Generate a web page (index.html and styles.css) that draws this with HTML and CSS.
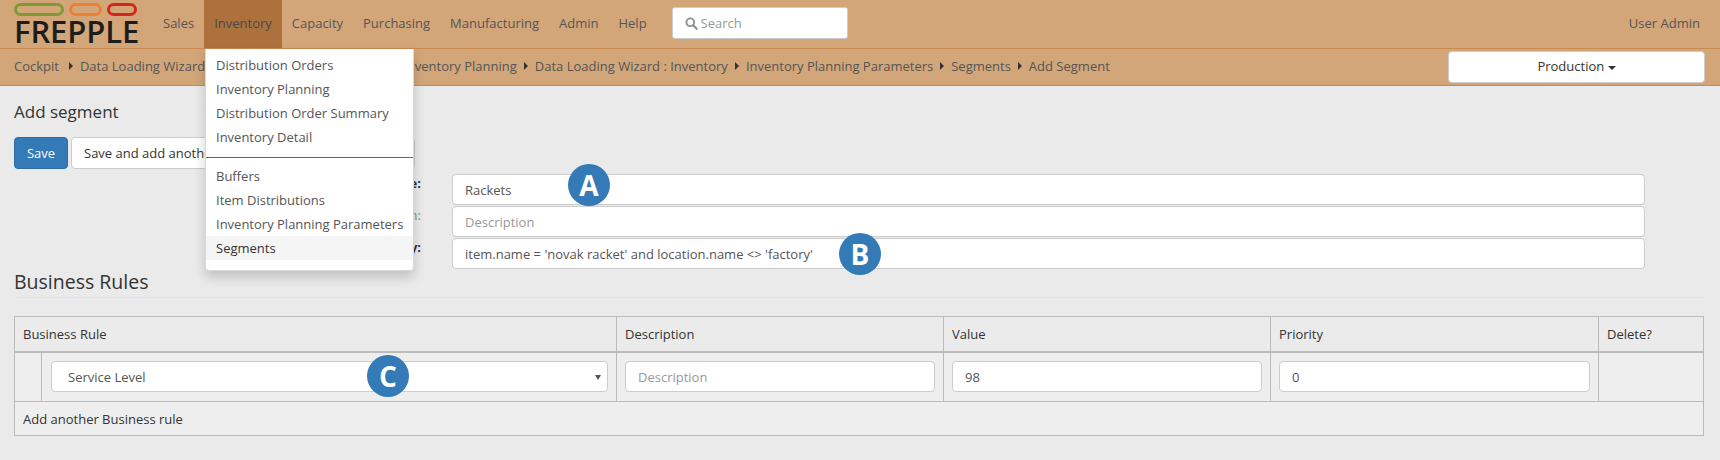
FILE: index.html
```html
<!DOCTYPE html>
<html lang="en">
<head>
<meta charset="utf-8">
<title>Add segment</title>
<link rel="stylesheet" href="styles.css">
</head>
<body>
<header class="navbar">
  <a class="logo">
    <span class="pills"><i class="pill green"></i><i class="pill orange"></i><i class="pill red"></i></span>
    <span class="logo-text">FREPPLE</span>
  </a>
  <nav class="menu">
    <a class="menu-item">Sales</a>
    <a class="menu-item active">Inventory</a>
    <a class="menu-item">Capacity</a>
    <a class="menu-item">Purchasing</a>
    <a class="menu-item">Manufacturing</a>
    <a class="menu-item">Admin</a>
    <a class="menu-item">Help</a>
  </nav>
  <div class="search">
    <svg class="search-icon" viewBox="0 0 14 14" width="13" height="13"><circle cx="5.7" cy="5.7" r="4.2" fill="none" stroke="#8a8f94" stroke-width="2"/><path d="M8.8 8.8L12.6 12.6" stroke="#8a8f94" stroke-width="2.4" stroke-linecap="round"/></svg>
    <input class="search-input" type="text" placeholder="Search">
  </div>
  <a class="user">User Admin</a>
</header>

<div class="crumbs">
  <ol class="crumb-list">
    <li class="first">Cockpit</li><li class="sep"></li>
    <li>Data Loading Wizard : Inventory</li><li class="sep"></li>
    <li class="tight">Inventory Detail</li><li class="sep"></li>
    <li>Inventory Planning</li><li class="sep"></li>
    <li>Data Loading Wizard : Inventory</li><li class="sep"></li>
    <li>Inventory Planning Parameters</li><li class="sep"></li>
    <li>Segments</li><li class="sep"></li>
    <li>Add Segment</li>
  </ol>
  <button class="scenario" type="button">Production <span class="caret"></span></button>
</div>

<ul class="dropdown">
  <li>Distribution Orders</li>
  <li>Inventory Planning</li>
  <li>Distribution Order Summary</li>
  <li>Inventory Detail</li>
  <li class="divider"></li>
  <li>Buffers</li>
  <li>Item Distributions</li>
  <li>Inventory Planning Parameters</li>
  <li class="hover">Segments</li>
</ul>

<main class="content">
  <h1 class="title">Add segment</h1>
  <div class="actions">
    <button class="btn primary" type="button">Save</button>
    <button class="btn wide" type="button">Save and add another</button>
  </div>
  <form class="fields">
    <label class="field-label strong">Name:</label>
    <input class="control" type="text" value="Rackets">
    <label class="field-label muted">Description:</label>
    <input class="control" type="text" placeholder="Description">
    <label class="field-label strong">Query:</label>
    <input class="control" type="text" value="item.name = 'novak racket' and location.name &lt;&gt; 'factory'">
  </form>
  <h2 class="section">Business Rules</h2>
  <table class="rules">
    <colgroup><col class="c1"><col class="c2"><col class="c3"><col class="c4"><col class="c5"><col class="c6"></colgroup>
    <thead>
      <tr><th colspan="2">Business Rule</th><th>Description</th><th>Value</th><th>Priority</th><th>Delete?</th></tr>
    </thead>
    <tbody>
      <tr class="data">
        <td></td>
        <td class="select-cell"><div class="select"><span>Service Level</span><i class="arrow"></i></div></td>
        <td><input class="control" type="text" placeholder="Description"></td>
        <td><input class="control" type="text" value="98"></td>
        <td><input class="control" type="text" value="0"></td>
        <td></td>
      </tr>
      <tr class="add"><td colspan="6">Add another Business rule</td></tr>
    </tbody>
  </table>
</main>

<span class="marker a">A</span>
<span class="marker b">B</span>
<span class="marker c">C</span>
</body>
</html>
```
FILE: styles.css
```css
* { box-sizing: border-box; }
html, body { margin: 0; height: 460px; overflow: hidden; }
body {
  position: relative;
  background: #eaeaea;
  color: #333;
  font: 13px/18px "Open Sans", sans-serif;
}
.navbar {
  display: flex;
  align-items: stretch;
  height: 49px;
  background: #d2a679;
  border-bottom: 1px solid #c98a50;
}
.logo { width: 153px; padding: 3px 0 0 14px; display: block; flex: none; }
.pills { display: flex; height: 14px; }
.pill { display: block; height: 13px; border: 3px solid; border-radius: 7px; }
.green { width: 50px; border-color: #7f9a35; }
.orange { width: 33px; margin-left: 5px; border-color: #ec8134; }
.red { width: 30px; margin-left: 5px; border-color: #d3261c; }
.logo-text {
  display: block;
  margin-top: -1px;
  font-size: 31px;
  line-height: 30px;
  font-weight: 600;
  letter-spacing: -0.1px;
  color: #1d1d1b;
}
.menu { display: flex; flex: none; }
.menu-item { padding: 14px 10px 0; color: #555; }
.menu-item.active { background: #ad713e; color: #4a4a4a; }
.search {
  position: relative;
  width: 176px;
  height: 32px;
  margin: 7px 0 0 15px;
  flex: none;
}
.search-icon { position: absolute; left: 13px; top: 10px; }
.search-input {
  width: 100%;
  height: 100%;
  padding: 0 8px 0 28px;
  border: 1px solid #ccc;
  border-radius: 3px;
  background: #fff;
  font: inherit;
  color: #555;
}
.search-input::placeholder { color: #999; }
.user { margin-left: auto; padding: 14px 20px 0 0; color: #555; }
.crumbs {
  display: flex;
  justify-content: space-between;
  height: 37px;
  padding: 2px 15px 0 14px;
  background: #d2a679;
  border-bottom: 1px solid #c98a50;
}
.crumb-list {
  display: flex;
  align-items: center;
  list-style: none;
  margin: 0;
  padding: 0 0 5px;
  color: #555;
  white-space: nowrap;
}
.first { margin-right: 3px; }
.tight { margin-right: -2px; }
.sep {
  width: 0;
  height: 0;
  margin: 0 7px;
  border-left: 4px solid #333;
  border-top: 4px solid transparent;
  border-bottom: 4px solid transparent;
}
.scenario {
  width: 257px;
  height: 32px;
  border: 1px solid #ccc;
  border-radius: 4px;
  background: #fff;
  color: #333;
  font: inherit;
  padding: 0 0 2px;
}
.caret {
  display: inline-block;
  vertical-align: middle;
  border-top: 4px solid #333;
  border-left: 4px solid transparent;
  border-right: 4px solid transparent;
}
.dropdown {
  position: absolute;
  left: 205px;
  top: 49px;
  width: 209px;
  margin: 0;
  padding: 4px 0 10px;
  list-style: none;
  background: #fff;
  border: 1px solid rgba(0, 0, 0, 0.15);
  border-top: 0;
  border-radius: 0 0 4px 4px;
  box-shadow: 0 6px 12px rgba(0, 0, 0, 0.18);
  color: #555;
}
.dropdown li { height: 24px; padding: 3px 10px 0; white-space: nowrap; }
.dropdown li.hover { background: #f5f5f5; color: #333; }
.dropdown li.divider { height: 1px; padding: 0; margin: 8px 0 6px; background: #666; }
.content { padding: 0 16px 0 14px; }
.title { margin: 13px 0 0; font-size: 17px; line-height: 26px; font-weight: 400; color: #333; }
.actions { display: flex; gap: 3px; margin-top: 12px; }
.btn {
  height: 32px;
  border: 1px solid #ccc;
  border-radius: 4px;
  background: #fff;
  color: #333;
  font: inherit;
  padding: 0 12px;
}
.btn.primary { width: 54px; padding: 0; background: #337ab7; border-color: #2e6da4; color: #fff; }
.btn.wide { width: 344px; text-align: left; }
.fields {
  display: grid;
  grid-template-columns: 407px 1193px;
  column-gap: 31px;
  row-gap: 1px;
  margin-top: 5px;
}
.field-label { text-align: right; height: 31px; }
.strong { font-weight: 700; }
.muted { color: #888; }
.control {
  display: block;
  width: 100%;
  height: 31px;
  padding: 0 12px;
  border: 1px solid #ccc;
  border-radius: 4px;
  background: #fff;
  font: inherit;
  color: #555;
}
.control::placeholder { color: #999; }
.section {
  margin: 0;
  padding: 1px 0 4px;
  height: 29px;
  border-bottom: 1px solid #e3e3e3;
  font-size: 19.5px;
  line-height: 24px;
  font-weight: 400;
  color: #333;
}
.rules {
  margin-top: 18px;
  width: 1689px;
  table-layout: fixed;
  border-collapse: collapse;
  background: #eee;
}
.c1 { width: 27px; }
.c2 { width: 575px; }
.c3 { width: 327px; }
.c4 { width: 327px; }
.c5 { width: 328px; }
.c6 { width: 105px; }
.rules th, .rules td { border: 1px solid #bbb; padding: 0 8px; }
.rules th { height: 35px; font-weight: 400; text-align: left; background: #ebebeb; border-bottom: 2px solid #bbb; }
.rules .data td { height: 50px; padding: 8px 8px 0; vertical-align: top; }
.rules .data .select-cell { padding-left: 9px; }
.rules .data .control { padding-top: 2px; }
.rules .add td { height: 34px; padding: 0 8px; }
.select {
  display: flex;
  align-items: center;
  justify-content: space-between;
  height: 31px;
  padding: 2px 6px 0 16px;
  border: 1px solid #ccc;
  border-radius: 4px;
  background: #fff;
  color: #555;
}
.arrow {
  border-top: 5px solid #555;
  border-left: 3px solid transparent;
  border-right: 3px solid transparent;
}
.marker {
  position: absolute;
  display: flex;
  align-items: center;
  justify-content: center;
  width: 42px;
  height: 42px;
  border-radius: 50%;
  background: #337ab7;
  color: #fff;
  font-size: 28px;
  font-weight: 700;
}
.marker.a { left: 568px; top: 164px; }
.marker.b { left: 839px; top: 233px; }
.marker.c { left: 367px; top: 355px; }
```
